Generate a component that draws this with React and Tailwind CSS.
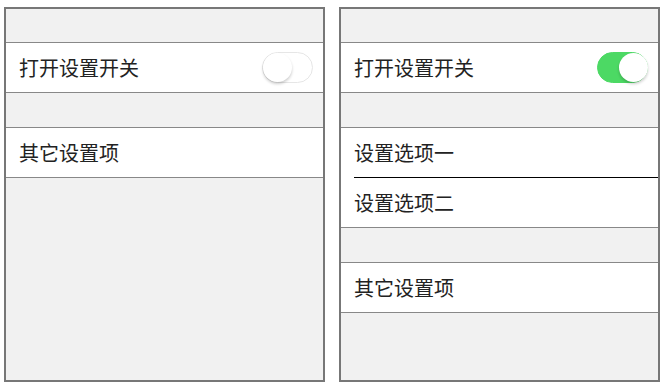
import React, { useState } from "react";

const font = { fontFamily: '"Noto Sans CJK SC", "Noto Sans", sans-serif' };

const Toggle = ({ on, onChange }) => {
  return (
    <div
      onClick={onChange}
      className={`relative w-[51px] h-[31px] rounded-full cursor-pointer border-[1.5px] ${
        on ? "bg-[#4cd964] border-[#4cd964]" : "bg-white border-[#e6e6e6]"
      }`}
    >
      <div
        className={`absolute top-[-0.5px] w-[29px] h-[29px] rounded-full bg-white shadow-[0_2px_3px_rgba(0,0,0,0.2)] ${
          on ? "right-[-0.5px]" : "left-[-0.5px]"
        }`}
      ></div>
    </div>
  );
};

const Row = ({ children, right }) => (
  <div className="flex items-center justify-between h-[51px] bg-white border-y border-[#888] pl-[13px] pr-[10px]">
    <span className="text-[20px] text-[#222]">{children}</span>
    {right}
  </div>
);

const Panel = ({ initial }) => {
  const [on, setOn] = useState(initial);

  return (
    <div className="w-[321px] h-[375px] border-2 border-[#777] bg-[#f1f1f1] flex flex-col">
      <div className="h-[33px]"></div>
      <Row right={<Toggle on={on} onChange={() => setOn(!on)} />}>打开设置开关</Row>
      <div className="h-[34px] shrink-0"></div>
      {on && (
        <div className="bg-white border-y border-[#888] -mb-[1px] relative z-10">
          <div className="flex items-center h-[49px] pl-[13px]">
            <span className="text-[20px] text-[#222]">设置选项一</span>
          </div>
          <div className="ml-[13px] h-px bg-black"></div>
          <div className="flex items-center h-[49px] pl-[13px]">
            <span className="text-[20px] text-[#222]">设置选项二</span>
          </div>
        </div>
      )}
      {on && <div className="h-[35px] shrink-0"></div>}
      <Row>其它设置项</Row>
    </div>
  );
};

const App = () => {
  return (
    <div className="w-[664px] h-[387px] bg-white flex gap-[14px] pl-[4px] pt-[7px]" style={font}>
      <Panel initial={false} />
      <Panel initial={true} />
    </div>
  );
};

export default App;
